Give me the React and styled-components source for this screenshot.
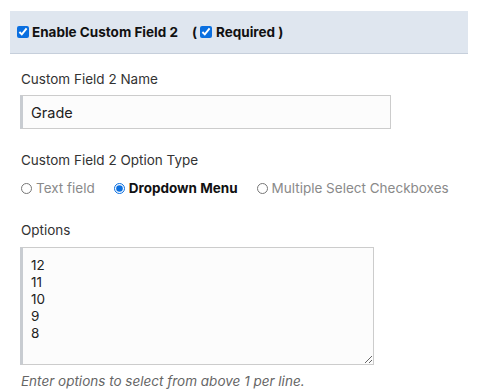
import React from 'react';
import styled, { createGlobalStyle } from 'styled-components';

const GlobalStyle = createGlobalStyle`
  body {
    margin: 0;
    background: #fff;
    font-family: Inter, "Noto Sans", sans-serif;
    color: #333;
  }
`;

const optionTypes = [
  { id: 'text', label: 'Text field' },
  { id: 'dropdown', label: 'Dropdown Menu' },
  { id: 'multi', label: 'Multiple Select Checkboxes' },
];

const App = () => {
  return (
    <Root>
      <GlobalStyle />
      <HeaderBar>
        <CheckLabel>
          <Check type="checkbox" defaultChecked />
          Enable Custom Field 2
        </CheckLabel>
        <Required>
          (
          <Check type="checkbox" defaultChecked />
          Required )
        </Required>
      </HeaderBar>
      <Body>
        <FieldLabel>Custom Field 2 Name</FieldLabel>
        <TextInput defaultValue="Grade" />

        <FieldLabel top={21}>Custom Field 2 Option Type</FieldLabel>
        <RadioRow>
          {optionTypes.map(opt => (
            <RadioLabel key={opt.id} active={opt.id === 'dropdown'}>
              <Radio type="radio" name="type" defaultChecked={opt.id === 'dropdown'} />
              {opt.label}
            </RadioLabel>
          ))}
        </RadioRow>

        <FieldLabel top={22}>Options</FieldLabel>
        <TextArea defaultValue={'12\n11\n10\n9\n8'} />
        <Help>Enter options to select from above 1 per line.</Help>
      </Body>
    </Root>
  );
};

const Root = styled.div`
  padding-top: 11px;
`;

const HeaderBar = styled.div`
  display: flex;
  align-items: center;
  margin: 0 11px 0 10px;
  height: 42px;
  padding-left: 7px;
  background: #dfe6ef;
  border-bottom: 1px solid #c6cfdb;
  font-size: 13.5px;
  font-weight: 700;
  color: #111;
`;

const CheckLabel = styled.label`
  display: flex;
  align-items: center;
`;

const Required = styled.label`
  display: flex;
  align-items: center;
  margin-left: 14px;
`;

const Check = styled.input`
  width: 12px;
  height: 12px;
  margin: 0 3px 0 0;
  accent-color: #0a6fe0;
  ${Required} & {
    margin: 0 4px 0 3px;
  }
`;

const Body = styled.div`
  padding: 15px 0 0 20px;
`;

const FieldLabel = styled.div`
  margin-top: ${({ top }) => top || 0}px;
  line-height: 20px;
  font-size: 13.5px;
  padding-left: 1px;
  color: #333;
`;

const TextInput = styled.input`
  display: block;
  box-sizing: border-box;
  margin-top: 6px;
  width: 371px;
  height: 34px;
  padding: 1px 8px 0;
  border: 1px solid #ccc;
  border-left: 3px solid #c8ccd1;
  background: #fcfcfc;
  font-family: Inter, sans-serif;
  font-size: 14.5px;
  color: #222;
  outline: none;
`;

const RadioRow = styled.div`
  display: flex;
  align-items: center;
  gap: 18px;
  margin-top: 8px;
  height: 20px;
`;

const RadioLabel = styled.label`
  display: flex;
  align-items: center;
  font-size: 13.5px;
  font-weight: ${({ active }) => (active ? 700 : 400)};
  color: ${({ active }) => (active ? '#111' : '#8a8a8a')};
`;

const Radio = styled.input`
  width: 11px;
  height: 11px;
  margin: 0 4px 0 1px;
  accent-color: #0a6fe0;
`;

const TextArea = styled.textarea`
  display: block;
  box-sizing: border-box;
  margin-top: 7px;
  width: 354px;
  height: 118px;
  padding: 9px 8px 8px;
  border: 1px solid #ccc;
  border-left: 3px solid #c8ccd1;
  background: #fcfcfc;
  font-family: Inter, sans-serif;
  font-size: 13.5px;
  line-height: 17px;
  color: #222;
  outline: none;
`;

const Help = styled.div`
  margin-top: 6px;
  padding-left: 1px;
  line-height: 20px;
  font-size: 13.5px;
  font-style: italic;
  color: #666;
`;

export default App;
